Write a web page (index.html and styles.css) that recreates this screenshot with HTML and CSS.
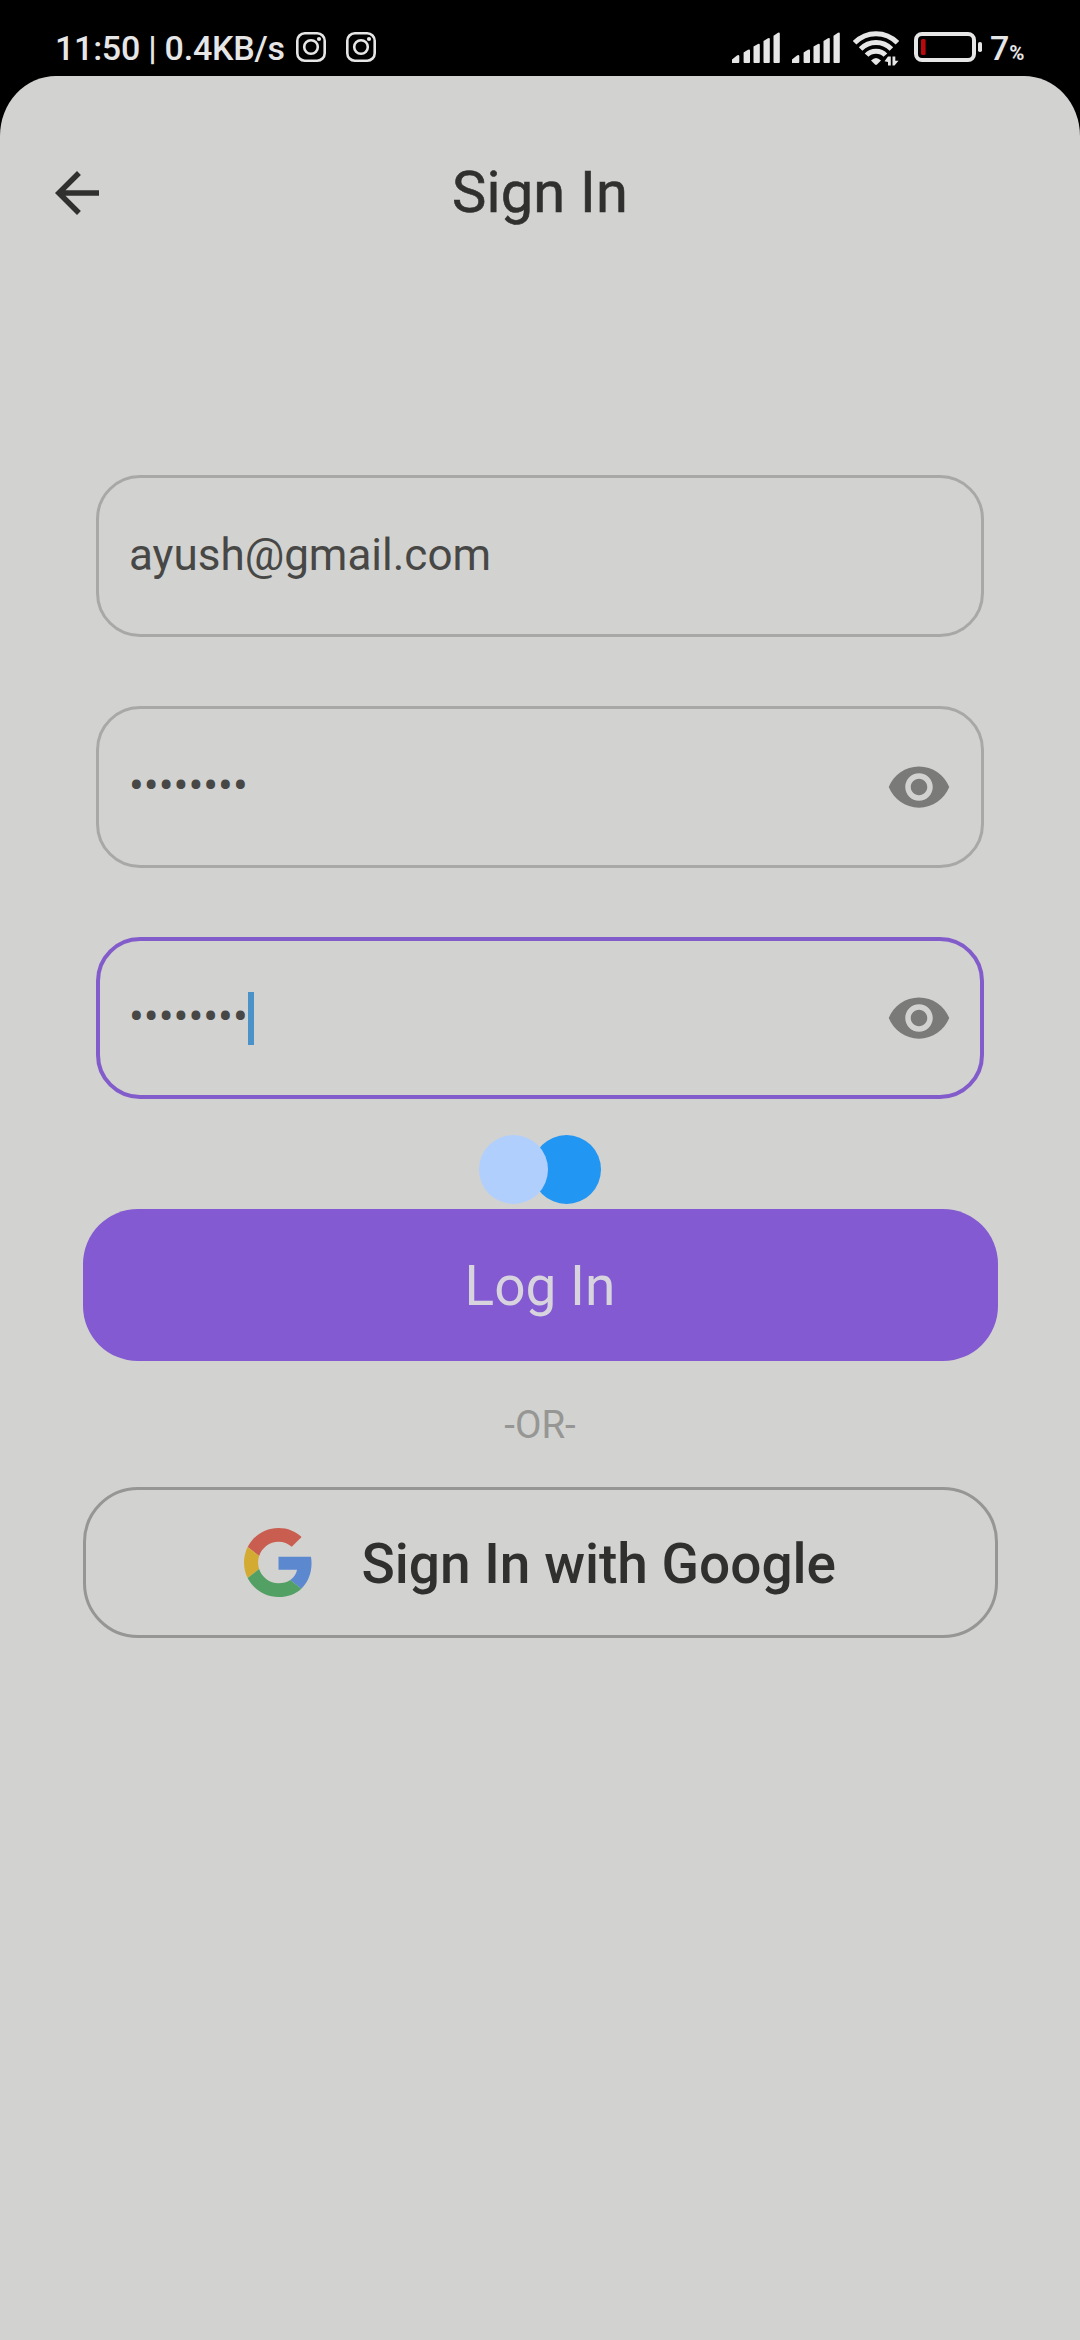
FILE: index.html
```html
<!DOCTYPE html>
<html lang="en">
<head>
<meta charset="utf-8">
<title>Sign In</title>
<link rel="stylesheet" href="styles.css">
</head>
<body>
<svg width="0" height="0" class="defs" aria-hidden="true">
  <symbol id="insta" viewBox="0 0 30 30">
    <rect x="1.300" y="1.300" width="27.400" height="27.400" rx="7.500" fill="none" stroke="#e6e6e6" stroke-width="2.600"/>
    <circle cx="15" cy="15" r="6.800" fill="none" stroke="#e6e6e6" stroke-width="2.600"/>
    <circle cx="23" cy="7" r="2.100" fill="#e6e6e6"/>
  </symbol>
  <symbol id="signal" viewBox="0 0 48 31">
    <path fill="#e6e6e6" d="M0 31V27.500L5 23.500Q7 22.500 7.300 24V30Q7.300 31 6.300 31ZM11.600 20.500L16 17.800Q18 17 18 18.500V30Q18 31 17 31H12.600Q11.600 31 11.600 30ZM21.500 14.500L26 12Q27.800 11.200 27.800 13V30Q27.800 31 26.800 31H22.500Q21.500 31 21.500 30ZM31.500 9L36 6.300Q37.800 5.500 37.800 7V30Q37.800 31 36.800 31H32.500Q31.500 31 31.500 30ZM41.500 3.800L46 .7Q47.800 0 47.800 1.500V30Q47.800 31 46.800 31H42.500Q41.500 31 41.500 30Z"/>
  </symbol>
  <symbol id="eye" viewBox="0 0 24 24">
    <path fill="#7a7a78" d="M12 4.500C7 4.500 2.730 7.610 1 12c1.730 4.390 6 7.500 11 7.500s9.270-3.110 11-7.500c-1.730-4.390-6-7.500-11-7.500zM12 17c-2.760 0-5-2.240-5-5s2.240-5 5-5 5 2.240 5 5-2.240 5-5 5zm0-8c-1.660 0-3 1.340-3 3s1.340 3 3 3 3-1.340 3-3-1.340-3-3-3z"/>
  </symbol>
</svg>

<header class="status">
  <span class="clock">11:50 | 0.4KB/s</span>
  <svg class="app-icon"><use href="#insta"/></svg>
  <svg class="app-icon"><use href="#insta"/></svg>
  <svg class="signal first"><use href="#signal"/></svg>
  <svg class="signal"><use href="#signal"/></svg>
  <svg class="wifi" viewBox="0 0 46 35">
    <g fill="none" stroke="#e6e6e6" stroke-width="5">
      <path d="M1.600 11.800Q10.500 2.700 23 2.700T44.400 11.800"/>
      <path d="M7.600 18Q14 11.500 23 11.500T38.400 18"/>
      <path d="M13.600 24.200Q17 20.300 23 20.300T32.400 24.200"/>
    </g>
    <path fill="#e6e6e6" d="M18 29.500Q23 24.500 28 29.500L24 33.600Q23 34.500 22 33.600ZM35 25.500h2.800V34.500H35V31L31.500 30.300ZM39.500 25.500h2.800v4.200h3.200L41.500 34.500h-2Z"/>
  </svg>
  <svg class="battery" viewBox="0 0 68 30">
    <rect x="2" y="2" width="58" height="26" rx="6" fill="none" stroke="#e6e6e6" stroke-width="4"/>
    <rect x="7" y="7" width="4.600" height="16" rx="1.500" fill="#b9090c"/>
    <rect x="64" y="10" width="4" height="10" rx="1.800" fill="#e6e6e6"/>
  </svg>
  <span class="percent">7<small>%</small></span>
</header>

<main class="sheet">
  <div class="appbar">
    <svg class="back" viewBox="0 0 24 24"><path fill="#30302e" d="M20 11H7.830l5.590-5.590L12 4l-8 8 8 8 1.410-1.410L7.830 13H20v-2z"/></svg>
    <h1 class="title">Sign In</h1>
  </div>

  <form class="fields">
    <div class="field"><span class="value">ayush@gmail.com</span></div>
    <div class="field"><span class="value">••••••••</span><svg class="eye"><use href="#eye"/></svg></div>
    <div class="field focused"><span class="value">••••••••</span><i class="caret"></i><svg class="eye"><use href="#eye"/></svg></div>
  </form>

  <div class="loader"><i class="ball light"></i><i class="ball blue"></i></div>

  <div class="button login">Log In</div>
  <div class="or">-OR-</div>
  <div class="button google">
    <svg class="glogo" viewBox="0 0 48 48">
      <path fill="#c95e50" d="M24 9.500c3.540 0 6.710 1.220 9.210 3.600l6.850-6.850C35.900 2.380 30.470 0 24 0 14.620 0 6.510 5.380 2.560 13.220l7.980 6.190C12.430 13.720 17.740 9.500 24 9.500z"/>
      <path fill="#5b88cf" d="M46.980 24.550c0-1.570-.150-3.090-.380-4.550H24v9.020h12.940c-.580 2.960-2.260 5.480-4.780 7.180l7.730 6c4.510-4.180 7.090-10.360 7.090-17.650z"/>
      <path fill="#d3ab32" d="M10.530 28.590c-.480-1.450-.760-2.990-.760-4.590s.270-3.140.760-4.590l-7.980-6.190C.920 16.460 0 20.120 0 24c0 3.880.920 7.540 2.560 10.780l7.970-6.190z"/>
      <path fill="#53a065" d="M24 48c6.480 0 11.930-2.130 15.890-5.810l-7.730-6c-2.150 1.450-4.920 2.300-8.160 2.300-6.260 0-11.570-4.220-13.470-9.910l-7.980 6.190C6.510 42.620 14.620 48 24 48z"/>
    </svg>
    <span class="glabel">Sign In with Google</span>
  </div>
</main>
</body>
</html>
```

FILE: styles.css
```css
* { box-sizing: border-box; }
body {
  margin: 0;
  width: 1080px;
  height: 2340px;
  display: flex;
  flex-direction: column;
  background: #000;
  font-family: Roboto, sans-serif;
  overflow: hidden;
}
svg { display: block; flex: none; }
.defs { position: absolute; }

/* Status bar */
.status {
  height: 76px;
  padding: 31px 0 0 55px;
  display: flex;
  align-items: flex-start;
  color: #e6e6e6;
  font-weight: 500;
}
.clock {
  width: 241px;
  font-size: 34px;
  line-height: 34px;
  letter-spacing: -0.250px;
  white-space: nowrap;
}
.app-icon { width: 30px; height: 30px; margin: 1px 20px 0 0; }
.signal { width: 48px; height: 31px; margin: 1px 12px 0 0; }
.signal.first { margin-left: 336px; }
.wifi { width: 46px; height: 35px; margin-left: 1px; }
.battery { width: 68px; height: 30px; margin: 1px 0 0 15px; }
.percent { margin-left: 8px; font-size: 34px; line-height: 34px; }
.percent small { font-size: 20.500px; font-weight: 700; }

/* App surface */
.sheet {
  flex: 1;
  background: #d2d2d0;
  border-radius: 56px 56px 0 0 / 60px 60px 0 0;
  display: flex;
  flex-direction: column;
  align-items: center;
}
.appbar {
  width: 100%;
  height: 154px;
  margin-top: 40px;
  padding: 0 44px;
  display: grid;
  grid-template-columns: 66px 1fr 66px;
  align-items: center;
}
.back { width: 66px; height: 66px; }
.title {
  margin: 0;
  padding-bottom: 2px;
  color: #30302e;
  font-size: 57.750px;
  line-height: 68px;
  font-weight: 400;
  letter-spacing: 0.200px;
  -webkit-text-stroke: 0.600px #30302e;
  text-align: center;
}

.fields {
  width: 888px;
  margin-top: 205px;
  display: flex;
  flex-direction: column;
  gap: 68.750px;
}
.field {
  height: 162.250px;
  padding: 0 29px 0 30px;
  display: flex;
  align-items: center;
  border: 3px solid #a8a8a6;
  border-radius: 44px;
}
.field.focused { border: 4px solid #835ccb; padding: 0 28px 0 29px; }
.value {
  color: #474745;
  font-size: 44px;
  line-height: 52px;
  padding-bottom: 2px;
}
.caret { width: 6px; height: 53px; background: #4b92c8; }
.eye { width: 66px; height: 66px; margin-left: auto; }

.loader {
  height: 69px;
  margin-top: 36px;
  display: flex;
}
.ball { width: 69px; height: 69px; border-radius: 50%; }
.light { background: #b1cffd; z-index: 1; }
.blue { background: #2296f3; margin-left: -16px; }

.button {
  width: 915px;
  height: 151.250px;
  display: flex;
  align-items: center;
  border-radius: 55px;
  font-size: 55px;
  line-height: 64px;
}
.login {
  margin-top: 5px;
  padding-top: 2px;
  justify-content: center;
  background: #835ad1;
  color: #d8d4de;
}
.or {
  height: 126.500px;
  padding-top: 2px;
  display: flex;
  align-items: center;
  color: #969694;
  font-size: 38.500px;
  line-height: 44px;
}
.google {
  padding-left: 158px;
  border: 3px solid #969694;
  color: #30302e;
  font-weight: 500;
}
.glogo { width: 69px; height: 69px; }
.glabel { margin-left: 49px; padding-top: 2px; white-space: nowrap; }
```
